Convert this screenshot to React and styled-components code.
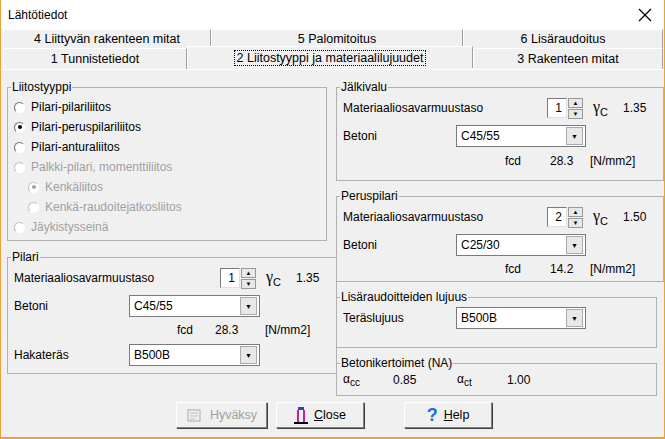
import React from "react";
import styled, { createGlobalStyle } from "styled-components";

const G = createGlobalStyle`
  body{margin:0;font-family:"Liberation Sans",sans-serif;font-size:12px;color:#000;}
`;
const Win = styled.div`width:665px;height:439px;box-sizing:border-box;border-left:1px solid #e8a33a;border-bottom:2px solid #e8a33a;border-right:1px solid #e8a33a;background:#f0f0f0;display:flex;flex-direction:column;overflow:hidden;font-family:"Liberation Sans",sans-serif;font-size:12px;`;
const Title = styled.div`height:29px;background:#fff;display:flex;align-items:center;justify-content:space-between;padding:0 12px 0 7px;font-size:12px;`;
const TabRow = styled.div`display:flex;height:${p=>p.h}px;padding-left:2px;`;
const Tab = styled.div`width:${p=>p.w}px;box-sizing:border-box;display:flex;align-items:center;justify-content:center;border-top:1px solid #fff;border-left:1px solid #fff;border-right:1px solid #a0a0a0;background:#f0f0f0;font-size:12.5px;${p=>p.sel?"margin-top:-2px;height:22px;":""}`;
const SelLabel = styled.span`outline:1px dotted #000;padding:0 2px;`;
const Panel = styled.div`flex:1;border-top:1px solid #fff;display:flex;flex-direction:column;padding:10px 8px 0 6px;`;
const Cols = styled.div`display:flex;gap:9px;`;
const Col = styled.div`display:flex;flex-direction:column;gap:${p=>p.gap}px;width:${p=>p.w}px;`;
const Group = styled.fieldset`margin:0;border:1px solid #b0b0b0;border-radius:0;height:${p=>p.h}px;box-sizing:border-box;padding:${p=>p.pt||0}px 0 0 6px;`;
const Legend = styled.legend`padding:0 1px;margin-left:-3px;font-size:12px;color:#000;`;
const Radio = styled.div`display:flex;align-items:center;gap:6px;height:20px;padding-left:${p=>p.ind?14:0}px;color:${p=>p.dis?"#a0a0a0":"#000"};`;
const Circle = styled.span`width:11px;height:11px;border-radius:50%;box-sizing:border-box;border:1px solid ${p=>p.dis?"#c0c0c0":"#707070"};border-right-color:#fff;border-bottom-color:#fff;background:#fff;display:flex;align-items:center;justify-content:center;&::after{content:"";width:4px;height:4px;border-radius:50%;background:${p=>p.on?(p.dis?"#a0a0a0":"#000"):"transparent"};}`;
const Row = styled.div`display:flex;align-items:center;height:${p=>p.h||28}px;`;
const Cell = styled.div`width:${p=>p.w}px;flex:none;text-align:${p=>p.a||"left"};`;
const SpinBox = styled.div`display:flex;align-items:center;gap:1px;`;
const SpinVal = styled.div`width:20px;height:20px;box-sizing:border-box;border:1px solid #7a7a7a;border-right-color:#e0e0e0;border-bottom-color:#e0e0e0;background:#fff;text-align:right;padding:2px 4px 0 0;`;
const Arrows = styled.div`display:flex;flex-direction:column;width:15px;height:21px;gap:1px;`;
const Arr = styled.div`flex:1;background:#e8e8e8;border:1px solid #999;display:flex;align-items:center;justify-content:center;font-size:6px;line-height:1;`;
const Gamma = styled.div`width:30px;font-family:"Liberation Serif",serif;font-size:16px;padding-left:10px;`;
const Sub = styled.sub`font-family:"Liberation Sans",sans-serif;font-size:11px;`;
const Combo = styled.div`width:${p=>p.w||131}px;height:22px;box-sizing:border-box;border:1px solid #7a7a7a;background:#fff;display:flex;align-items:center;justify-content:space-between;padding:0 2px 0 4px;`;
const Drop = styled.div`width:15px;height:16px;background:#e8e8e8;border:1px solid #aaa;font-size:7px;display:flex;align-items:center;justify-content:center;`;
const Btns = styled.div`display:flex;gap:9px;margin-top:auto;padding:0 0 9px 169px;`;
const Btn = styled.div`width:${p=>p.w}px;height:26px;box-sizing:border-box;border:1px solid;border-color:#fff #808080 #808080 #fff;box-shadow:1px 1px 0 #404040;display:flex;align-items:center;justify-content:center;gap:6px;font-size:12.5px;color:${p=>p.dis?"#a0a0a0":"#000"};margin-left:${p=>p.ml||0}px;`;

const Spin = ({v}) => <SpinBox><SpinVal>{v}</SpinVal><Arrows><Arr>▲</Arr><Arr>▼</Arr></Arrows></SpinBox>;
const Gam = () => <Gamma>γ<Sub>C</Sub></Gamma>;

export default function App(){
  return <Win><G/>
    <Title><span>Lähtötiedot</span><svg width="14" height="14"><path d="M1 1L13 13M13 1L1 13" stroke="#000" strokeWidth="1.2"/></svg></Title>
    <TabRow h={19}><Tab w={208}>4 Liittyvän rakenteen mitat</Tab><Tab w={252}>5 Palomitoitus</Tab><Tab w={200}>6 Lisäraudoitus</Tab></TabRow>
    <TabRow h={21}><Tab w={184}>1 Tunnistetiedot</Tab><Tab w={286} sel><SelLabel>2 Liitostyyppi ja materiaalilujuudet</SelLabel></Tab><Tab w={190}>3 Rakenteen mitat</Tab></TabRow>
    <Panel>
      <Cols>
        <Col w={320} gap={9}>
          <Group h={161} pt={3}><Legend>Liitostyyppi</Legend>
            <Radio><Circle/>Pilari-pilariliitos</Radio>
            <Radio><Circle on/>Pilari-peruspilariliitos</Radio>
            <Radio><Circle/>Pilari-anturaliitos</Radio>
            <Radio dis><Circle dis/>Palkki-pilari, momenttiliitos</Radio>
            <Radio dis ind><Circle dis on/>Kenkäliitos</Radio>
            <Radio dis ind><Circle dis/>Kenkä-raudoitejatkosliitos</Radio>
            <Radio dis><Circle dis/>Jäykistysseinä</Radio>
          </Group>
          <Group h={124}><Legend>Pilari</Legend>
            <Row><Cell w={206}>Materiaaliosavarmuustaso</Cell><Spin v="1"/><Gam/><Cell w={40}>1.35</Cell></Row>
            <Row><Cell w={115}>Betoni</Cell><Combo><span>C45/55</span><Drop>▼</Drop></Combo></Row>
            <Row h={20}><Cell w={163}/><Cell w={38}>fcd</Cell><Cell w={50}>28.3</Cell><Cell w={60}>[N/mm2]</Cell></Row>
            <Row h={30}><Cell w={115}>Hakateräs</Cell><Combo><span>B500B</span><Drop>▼</Drop></Combo></Row>
          </Group>
        </Col>
        <Col w={321} gap={8}>
          <Group h={101}><Legend>Jälkivalu</Legend>
            <Row><Cell w={204}>Materiaaliosavarmuustaso</Cell><Spin v="1"/><Gam/><Cell w={40}>1.35</Cell></Row>
            <Row><Cell w={113}>Betoni</Cell><Combo w={130}><span>C45/55</span><Drop>▼</Drop></Combo></Row>
            <Row h={22}><Cell w={162}/><Cell w={45}>fcd</Cell><Cell w={40}>28.3</Cell><Cell w={60}>[N/mm2]</Cell></Row>
          </Group>
          <Group h={93}><Legend>Peruspilari</Legend>
            <Row><Cell w={204}>Materiaaliosavarmuustaso</Cell><Spin v="2"/><Gam/><Cell w={40}>1.50</Cell></Row>
            <Row><Cell w={113}>Betoni</Cell><Combo w={130}><span>C25/30</span><Drop>▼</Drop></Combo></Row>
            <Row h={20}><Cell w={162}/><Cell w={45}>fcd</Cell><Cell w={40}>14.2</Cell><Cell w={60}>[N/mm2]</Cell></Row>
          </Group>
          <Group h={58}><Legend>Lisäraudoitteiden lujuus</Legend>
            <Row><Cell w={113}>Teräslujuus</Cell><Combo w={130}><span>B500B</span><Drop>▼</Drop></Combo></Row>
          </Group>
          <Group h={40}><Legend>Betonikertoimet (NA)</Legend>
            <Row h={20}><Cell w={50}>α<sub>cc</sub></Cell><Cell w={64}>0.85</Cell><Cell w={50}>α<sub>ct</sub></Cell><Cell w={40}>1.00</Cell></Row>
          </Group>
        </Col>
      </Cols>
      <Btns>
        <Btn w={91} dis><svg width="18" height="16"><rect x="2" y="3" width="12" height="11" fill="none" stroke="#aaa"/><path d="M4 6h8M4 9h8M4 12h5" stroke="#bbb"/></svg>Hyväksy</Btn>
        <Btn w={88}><svg width="14" height="18"><rect x="4" y="1" width="6" height="3" fill="#3040c0"/><rect x="3" y="4" width="2" height="13" fill="#c020a0"/><rect x="9" y="4" width="2" height="13" fill="#c020a0"/><rect x="0" y="16" width="14" height="2" fill="#000"/></svg><span><u>C</u>lose</span></Btn>
        <Btn w={88} ml={31}><span style={{color:"#1a6fd0",fontWeight:"bold",fontSize:18}}>?</span><span><u>H</u>elp</span></Btn>
      </Btns>
    </Panel>
  </Win>;
}
